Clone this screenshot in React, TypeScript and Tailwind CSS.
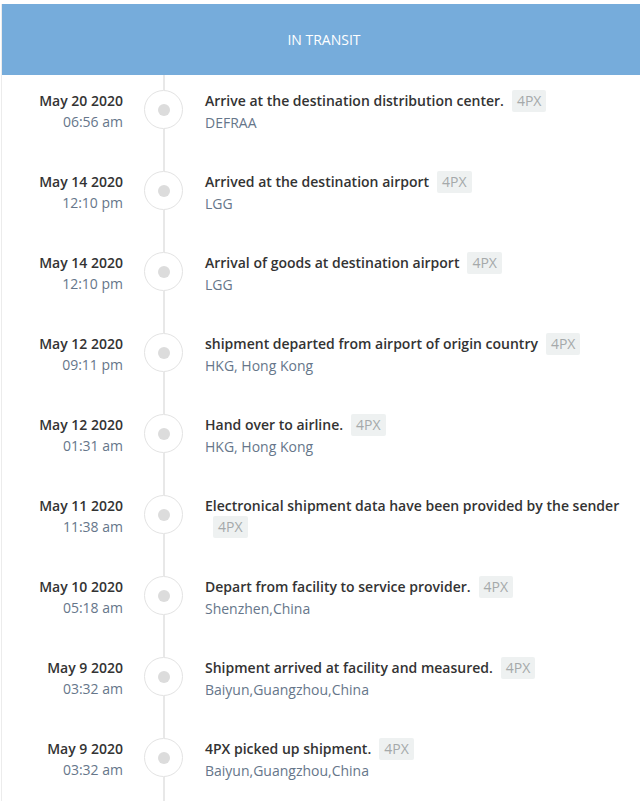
import React from "react";

type TrackEvent = {
    date: string;
    time: string;
    title: string;
    location: string;
    carrier: string;
};

const EVENTS: TrackEvent[] = [
    { date: "May 20 2020", time: "06:56 am", title: "Arrive at the destination distribution center.", location: "DEFRAA", carrier: "4PX" },
    { date: "May 14 2020", time: "12:10 pm", title: "Arrived at the destination airport", location: "LGG", carrier: "4PX" },
    { date: "May 14 2020", time: "12:10 pm", title: "Arrival of goods at destination airport", location: "LGG", carrier: "4PX" },
    { date: "May 12 2020", time: "09:11 pm", title: "shipment departed from airport of origin country", location: "HKG, Hong Kong", carrier: "4PX" },
    { date: "May 12 2020", time: "01:31 am", title: "Hand over to airline.", location: "HKG, Hong Kong", carrier: "4PX" },
    { date: "May 11 2020", time: "11:38 am", title: "Electronical shipment data have been provided by the sender", location: "", carrier: "4PX" },
    { date: "May 10 2020", time: "05:18 am", title: "Depart from facility to service provider.", location: "Shenzhen,China", carrier: "4PX" },
    { date: "May 9 2020", time: "03:32 am", title: "Shipment arrived at facility and measured.", location: "Baiyun,Guangzhou,China", carrier: "4PX" },
    { date: "May 9 2020", time: "03:32 am", title: "4PX picked up shipment.", location: "Baiyun,Guangzhou,China", carrier: "4PX" },
];

function TimelineRow({ event }: { event: TrackEvent }) {
    return (
        <div className="flex h-[81px]">
            {/* Date column */}
            <div className="w-[121px] shrink-0 pt-[15px] text-right">
                <div className="font-semibold text-[#333]">{event.date}</div>
                <div className="text-[#66768a]">{event.time}</div>
            </div>

            {/* Marker column */}
            <div className="ml-[21px] flex w-[39px] shrink-0 flex-col items-center">
                <div className="h-[15px] w-[2px] bg-[#e8e8e8]" />
                <div className="flex h-[39px] w-[39px] items-center justify-center rounded-full border border-[#e3e3e3] bg-white">
                    <div className="h-[12px] w-[12px] rounded-full bg-[#dcdcdc]" />
                </div>
                <div className="w-[2px] flex-1 bg-[#e8e8e8]" />
            </div>

            {/* Details */}
            <div className="ml-[22px] min-w-0 flex-1 pr-[10px] pt-[15px]">
                <div className="font-semibold text-[#333]">
                    {event.title}
                    <span className="ml-[8px] inline-block rounded-[2px] bg-[#eef1f1] px-[5px] font-normal leading-[22px] text-[#a5a9aa]">
                        {event.carrier}
                    </span>
                </div>
                {event.location && <div className="text-[#66768a]">{event.location}</div>}
            </div>
        </div>
    );
}

export default function App() {
    return (
        <div
            className="min-h-screen bg-white pt-[4px] text-[14px] leading-[21px]"
            style={{ fontFamily: '"Open Sans", "Liberation Sans", sans-serif' }}
        >
            <div className="ml-[1px] border-l border-[#ececec]">
                {/* Status header */}
                <div className="flex h-[71px] items-center justify-center bg-[#76acdb] pl-[6px] text-white">
                    IN TRANSIT
                </div>

                {/* Timeline */}
                <div>
                    {EVENTS.map((event, index) => (
                        <TimelineRow key={index} event={event} />
                    ))}
                </div>
            </div>
        </div>
    );
}
